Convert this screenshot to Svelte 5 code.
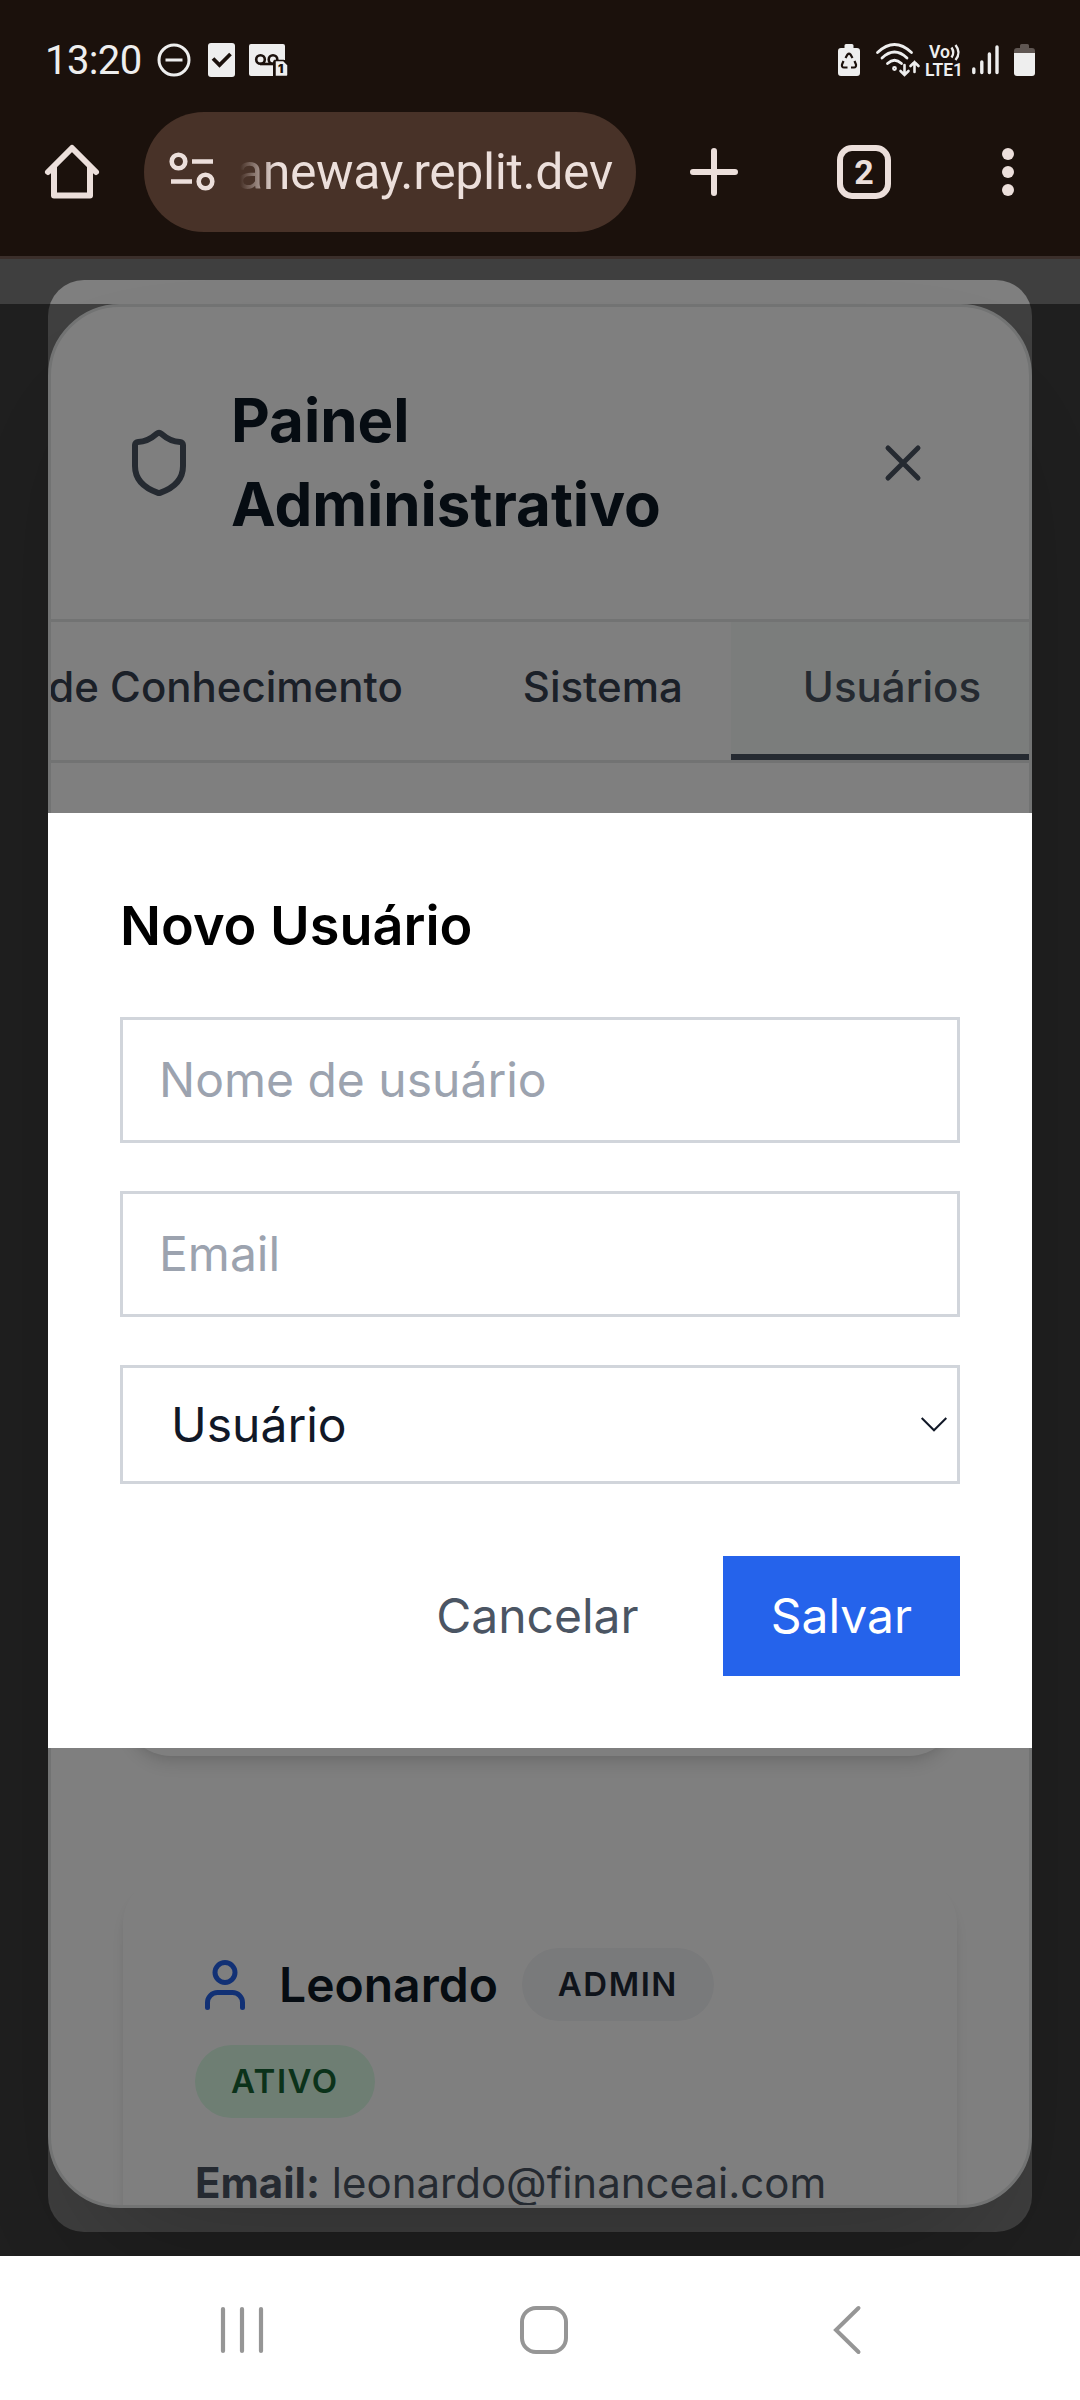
<script>
  const tabs = [
    { label: 'Base de Conhecimento', active: false },
    { label: 'Sistema', active: false },
    { label: 'Usuários', active: true }
  ];
</script>

<div class="phone">
  <header class="browser">
    <div class="status">
      <div class="status-left">
        <span class="clock">13:20</span>
        <svg class="dnd" width="34" height="34" viewBox="0 0 34 34" fill="none" stroke="#eee" stroke-width="3">
          <circle cx="17" cy="17" r="15" /><path d="M8.5 17h17" />
        </svg>
        <svg class="check" width="27" height="34" viewBox="0 0 27 34">
          <rect width="27" height="34" rx="3" fill="#eee" />
          <path d="M5 15.500l6.500 6.500L22.500 11" fill="none" stroke="#1b110c" stroke-width="3.800" />
        </svg>
        <svg class="voicemail" width="39" height="33" viewBox="0 0 39 33">
          <path d="M2 0h32q2 0 2 2v14H26q-2 0-2 2v14H2q-2 0-2-2V2q0-2 2-2z" fill="#eee" />
          <g fill="none" stroke="#1b110c" stroke-width="2.6"><circle cx="11.5" cy="15.5" r="4.3" /><circle cx="24" cy="15.5" r="4.3" /><path d="M11 20h14" /></g>
          <path d="M26 16.500h8.500l4.500 4.500v10q0 1.500-1.500 1.500H26z" fill="#eee" stroke="#1b110c" stroke-width="1.500" />
          <text x="29" y="29" class="tiny">1</text>
        </svg>
      </div>
      <div class="status-right">
        <svg width="22" height="32" viewBox="0 0 22 32">
          <path d="M6.500 4V1.500Q6.500 0 8 0h6q1.500 0 1.500 1.500V4H19q3 0 3 3v22q0 3-3 3H3q-3 0-3-3V7q0-3 3-3z" fill="#eee" />
          <path d="M7.500 14l2-3.500q1.500-1.500 3 0l2 3.500M16.500 17l1.500 3.500q.3 3-2 3H13M9.500 23.500H6q-2.500 0-2-3l1.500-3.500" fill="none" stroke="#1b110c" stroke-width="2.200" />
        </svg>
        <svg class="wifi" width="44" height="34" viewBox="0 0 44 34" fill="none" stroke="#eee" stroke-width="2.800" stroke-linecap="round">
          <path d="M1.500 9.500Q18.500-6.500 35.500 9.500M6 15q12.500-12 25 0M11.500 20.500q7-6.500 14 0" />
          <circle cx="18.500" cy="25.500" r="1" />
          <path d="M28.500 22v9M24.500 28l4 4 4-4M38.500 29V19M34.500 23l4-4 4 4" stroke-width="2.600" />
        </svg>
        <svg class="volte" width="38" height="34" viewBox="0 0 38 34">
          <text x="4" y="15" class="vo" textLength="21" lengthAdjust="spacingAndGlyphs">Vo</text>
          <path d="M26.500 4.500q3.500 5 0 10M30.500 2q6 7.500 0 15" fill="none" stroke="#eee" stroke-width="2.400" />
          <text x="0" y="32.500" class="lte" textLength="38" lengthAdjust="spacingAndGlyphs">LTE1</text>
        </svg>
        <svg class="signal" width="27" height="30" viewBox="0 0 27 30" stroke="#eee" stroke-width="3.400" stroke-linecap="round">
          <path d="M1.800 24v3.500M9.800 17v10.500M17.400 9v18.500M25 2v25.500" />
        </svg>
        <svg class="battery" width="21" height="32" viewBox="0 0 21 32">
          <path d="M6 4V1.500Q6 0 7.500 0h6Q15 0 15 1.500V4h3q3 0 3 3v3H0V7q0-3 3-3z" fill="#5f5652" />
          <path d="M0 9h21v20q0 3-3 3H3q-3 0-3-3z" fill="#eee" />
        </svg>
      </div>
    </div>
    <div class="toolbar">
      <svg class="home" width="54" height="56" viewBox="0 0 54 56" fill="none" stroke="#ecdfdb" stroke-width="6" stroke-linecap="round" stroke-linejoin="round">
        <path d="M3 28L27 4l24 24M9 23v28.500h36V23" />
      </svg>
      <div class="address">
        <svg width="46" height="40" viewBox="0 0 46 40" fill="none" stroke="#ecdfdb" stroke-width="4.600">
          <circle cx="9.500" cy="9.500" r="6.800" /><path d="M23 9.500h21M2 29.500h21" /><circle cx="36.500" cy="29.500" r="6.800" />
        </svg>
        <span class="url">aneway.replit.dev</span>
      </div>
      <svg class="plus" width="48" height="50" viewBox="0 0 48 50" stroke="#ecdfdb" stroke-width="6" stroke-linecap="round">
        <path d="M3 25h42M24 4v42" />
      </svg>
      <span class="tab-count">2</span>
      <svg class="more" width="14" height="50" viewBox="0 0 14 50" fill="#ecdfdb">
        <circle cx="7" cy="7" r="6" /><circle cx="7" cy="25" r="6" /><circle cx="7" cy="43" r="6" />
      </svg>
    </div>
  </header>

  <main class="viewport">
    <div class="sheet"></div>
    <div class="scrim lower">
      <section class="panel">
        <div class="panel-head">
          <svg width="72" height="72" viewBox="0 0 24 24" fill="none" stroke="#4b5563" stroke-width="2" stroke-linecap="round" stroke-linejoin="round">
            <path d="M20 13c0 5-3.500 7.500-7.660 8.950a1 1 0 0 1-.670-.010C7.500 20.500 4 18 4 13V6a1 1 0 0 1 1-1c2 0 4.500-1.200 6.240-2.720a1.170 1.170 0 0 1 1.520 0C14.510 3.810 17 5 19 5a1 1 0 0 1 1 1z" />
          </svg>
          <h1>Painel Administrativo</h1>
          <svg class="close" width="60" height="60" viewBox="0 0 24 24" fill="none" stroke="#4b5563" stroke-width="2" stroke-linecap="round">
            <path d="M18 6 6 18M6 6l12 12" />
          </svg>
        </div>
        <nav class="tabs">
          {#each tabs as tab}
            <span class="tab" class:active={tab.active}>{tab.label}</span>
          {/each}
        </nav>
        <div class="content">
          <article class="card first"></article>
          <article class="card">
            <div class="who">
              <svg width="60" height="60" viewBox="0 0 24 24" fill="none" stroke="#2563eb" stroke-width="2" stroke-linecap="round" stroke-linejoin="round">
                <path d="M19 21v-2a4 4 0 0 0-4-4H9a4 4 0 0 0-4 4v2" /><circle cx="12" cy="7" r="4" />
              </svg>
              <span class="name">Leonardo</span>
              <span class="badge">ADMIN</span>
              <span class="badge ok">ATIVO</span>
            </div>
            <p class="email"><b>Email:</b> leonardo@financeai.com</p>
          </article>
        </div>
      </section>
    </div>
    <div class="scrim top">
      <form class="dialog">
        <h2>Novo Usuário</h2>
        <div class="field placeholder">Nome de usuário</div>
        <div class="field placeholder">Email</div>
        <div class="field select">
          <span>Usuário</span>
          <svg width="26" height="15" viewBox="0 0 26 15" fill="none" stroke="#111827" stroke-width="2"><path d="M.7 1L13 13.300 25.300 1" /></svg>
        </div>
        <div class="actions">
          <span class="btn">Cancelar</span>
          <span class="btn primary">Salvar</span>
        </div>
      </form>
    </div>
  </main>

  <footer class="navbar">
    <svg width="44" height="48" viewBox="0 0 44 48" stroke="#969696" stroke-width="4.200" stroke-linecap="round"><path d="M3 3v42M22 3v42M41 3v42" /></svg>
    <svg width="48" height="48" viewBox="0 0 48 48" fill="none" stroke="#969696" stroke-width="4"><rect x="2" y="2" width="44" height="44" rx="14" /></svg>
    <svg class="back" width="28" height="50" viewBox="0 0 28 50" fill="none" stroke="#969696" stroke-width="4" stroke-linecap="round"><path d="M25.500 3L3 25l22.500 22" /></svg>
  </footer>
</div>

<style>
  :global(body) { margin: 0; background: #fff; }
  .phone { width: 1080px; height: 2400px; display: flex; flex-direction: column; overflow: hidden; font-family: Inter, "Liberation Sans", sans-serif; }
  svg { flex: none; display: block; overflow: visible; }

  .browser { height: 256px; box-sizing: border-box; background: #1b110c; flex: none; }
  .status { display: flex; justify-content: space-between; padding: 36px 45px 0 45px; height: 76px; box-sizing: border-box; font-family: Roboto, sans-serif; color: #eee; }
  .status-left, .status-right { display: flex; align-items: center; height: 48px; }
  .clock { font-size: 40px; line-height: 48px; padding-top: 1px; letter-spacing: -0.6px; width: 112px; }
  .check { margin-left: 17px; }
  .voicemail { margin-left: 14px; }
  .tiny { font: 900 12px Inter, sans-serif; fill: #1b110c; }
  .wifi { margin-left: 16px; }
  .volte { margin-left: 5px; }
  .vo { font: 600 18px Roboto, sans-serif; fill: #eee; }
  .lte { font: 600 18px Roboto, sans-serif; fill: #eee; }
  .signal { margin-left: 9px; }
  .battery { margin-left: 15px; }

  .toolbar { display: flex; align-items: center; height: 120px; margin-top: 36px; padding-left: 45px; }
  .address { width: 492px; height: 120px; box-sizing: border-box; margin-left: 45px; padding-left: 25px; border-radius: 60px; background: #483228; display: flex; align-items: center; }
  .url { margin-left: 21px; font: 400 50px/60px Roboto, sans-serif; letter-spacing: -0.4px; color: transparent; background: linear-gradient(90deg, #ecdfdb00 4px, #ecdfdb 40px); background-clip: text; -webkit-background-clip: text; }
  .plus { margin-left: 54px; }
  .tab-count { margin-left: 99px; width: 54px; height: 54px; box-sizing: border-box; border: 6px solid #ecdfdb; border-radius: 15px; font: 700 34px/43px Roboto, sans-serif; color: #ecdfdb; text-align: center; }
  .more { margin-left: 110px; }

  .viewport { position: relative; height: 2000px; flex: none; background: #7f7f7f; overflow: hidden; }
  .sheet { position: absolute; inset: 24px 48px; border-radius: 36px; background: #fff; }
  .scrim { position: absolute; inset: 0; background: rgba(0, 0, 0, 0.5); }
  .lower { top: 48px; padding: 0 48px 48px; }
  .top { border-top: 3px solid #3b2f2b; background-clip: padding-box; display: flex; justify-content: center; align-items: flex-start; padding-top: 554px; }

  .panel { height: 1904px; box-sizing: border-box; border: 3px solid #e5e7e7; border-radius: 72px; background: #fff; overflow: hidden; box-shadow: 0 75px 150px -36px rgba(0, 0, 0, 0.25); display: flex; flex-direction: column; }
  .panel-head { display: flex; align-items: center; padding: 72px; height: 312px; box-sizing: border-box; }
  h1 { margin: 0 0 2px 36px; width: 500px; font-size: 60px; line-height: 84px; font-weight: 700; color: #0c1824; }
  .close { margin: 0 24px 0 auto; }
  .tabs { display: flex; justify-content: flex-end; flex: none; border-top: 3px solid #e5e7e7; border-bottom: 3px solid #e5e7e7; overflow: hidden; }
  .tab { flex: none; padding: 35px 48px 37px 72px; border-bottom: 6px solid transparent; font-size: 42px; line-height: 60px; font-weight: 500; color: #374151; white-space: nowrap; }
  .active { color: #4b5563; border-color: #4b5563; background: #f7faf9; }

  .content { padding: 72px; }
  .card { height: 500px; box-sizing: border-box; padding: 72px; border-radius: 48px; background: #fff; box-shadow: 0 12px 18px -3px rgba(0, 0, 0, 0.1), 0 6px 12px -6px rgba(0, 0, 0, 0.1); }
  .first { height: 921px; margin-bottom: 120px; }
  .who { display: flex; flex-wrap: wrap; align-items: center; gap: 24px; }
  .name { padding-bottom: 1px; font-size: 48px; line-height: 71px; font-weight: 600; color: #0c1824; }
  .badge { padding: 12px 36px; border-radius: 99px; font-size: 33px; line-height: 49px; font-weight: 600; letter-spacing: 1.5px; background: #f3f4f6; color: #1f2937; }
  .ok { background: #dcfce7; color: #166534; }
  .email { margin: 35px 0 0; font-size: 42px; line-height: 60px; color: #4b5563; }

  .dialog { width: 984px; height: 935px; box-sizing: border-box; padding: 72px; background: #fff; display: flex; flex-direction: column; }
  h2 { margin: 0 0 50px; font-size: 54px; line-height: 82px; font-weight: 600; color: #000; }
  .field { height: 126px; box-sizing: border-box; border: 3px solid #d1d5db; padding: 24px 36px; margin-bottom: 48px; font-size: 48px; line-height: 72px; }
  .placeholder { color: #9ca3af; }
  .select { height: 119px; margin: 0 0 72px; padding: 0 10px 0 48px; display: flex; align-items: center; justify-content: space-between; color: #111827; }
  .actions { display: flex; justify-content: flex-end; gap: 36px; }
  .btn { padding: 24px 48px; font-size: 48px; line-height: 72px; color: #4b5563; }
  .primary { background: #2563eb; color: #fff; }

  .navbar { flex: 1; display: flex; align-items: center; background: #fff; padding: 4px 0 0 220px; gap: 256px; }
  .back { margin-left: 9px; }
</style>
